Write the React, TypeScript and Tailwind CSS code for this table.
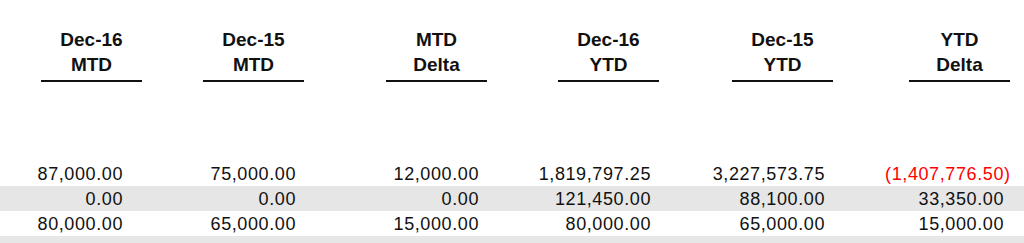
const COLS = [
  { top: 'Dec-16', bottom: 'MTD', width: 'w-[142px]', pr: 'pr-[13px]' },
  { top: 'Dec-15', bottom: 'MTD', width: 'w-[162px]', pr: 'pr-[2px]' },
  { top: 'MTD', bottom: 'Delta', width: 'w-[183px]', pr: 'pr-[2px]' },
  { top: 'Dec-16', bottom: 'YTD', width: 'w-[172px]', pr: 'pr-[2px]' },
  { top: 'Dec-15', bottom: 'YTD', width: 'w-[174px]', pr: 'pr-[2px]' },
  { top: 'YTD', bottom: 'Delta', width: 'w-[177px]', pr: 'pr-0' },
];

const ROWS: { values: number[]; shaded: boolean }[] = [
  { values: [87000, 75000, 12000, 1819797.25, 3227573.75, -1407776.5], shaded: false },
  { values: [0, 0, 0, 121450, 88100, 33350], shaded: true },
  { values: [80000, 65000, 15000, 80000, 65000, 15000], shaded: false },
];

function fmt(n: number) {
  return Math.abs(n).toLocaleString('en-US', { minimumFractionDigits: 2, maximumFractionDigits: 2 });
}

function Amount({ value }: { value: number }) {
  const neg = value < 0;
  return (
    <span className={neg ? 'text-[#ff0000]' : 'text-[#111]'}>
      {neg && '('}
      {fmt(value)}
      <span className="inline-block w-[6px] text-left tracking-normal">{neg ? ')' : ''}</span>
    </span>
  );
}

export default function App() {
  return (
    <div className="h-[243px] w-[1024px] overflow-hidden bg-white font-['Liberation_Sans',Arial,sans-serif]">
      <div className="flex pt-[27px]">
        {COLS.map((c, i) => (
          <div key={i} className={`${c.width} flex justify-end`}>
            <div className="flex w-[101px] flex-col items-center">
              <div className="text-[19px] font-bold leading-[25px] text-[#111]">{c.top}</div>
              <div className="text-[19px] font-bold leading-[25px] text-[#111]">{c.bottom}</div>
              <div className="mt-[3px] h-[2px] w-full bg-[#111]" />
            </div>
          </div>
        ))}
      </div>

      <div className="mt-[79px]">
        {ROWS.map((r, ri) => (
          <div key={ri} className={`flex h-[25px] items-center ${r.shaded ? 'bg-[#e6e6e6]' : ''}`}>
            {r.values.map((v, ci) => (
              <div
                key={ci}
                className={`${COLS[ci].width} ${COLS[ci].pr} pt-[2px] text-right text-[18px] leading-[25px] tracking-[0.6px]`}
              >
                <Amount value={v} />
              </div>
            ))}
          </div>
        ))}
        <div className="h-[25px] bg-[#e6e6e6]" />
      </div>
    </div>
  );
}
